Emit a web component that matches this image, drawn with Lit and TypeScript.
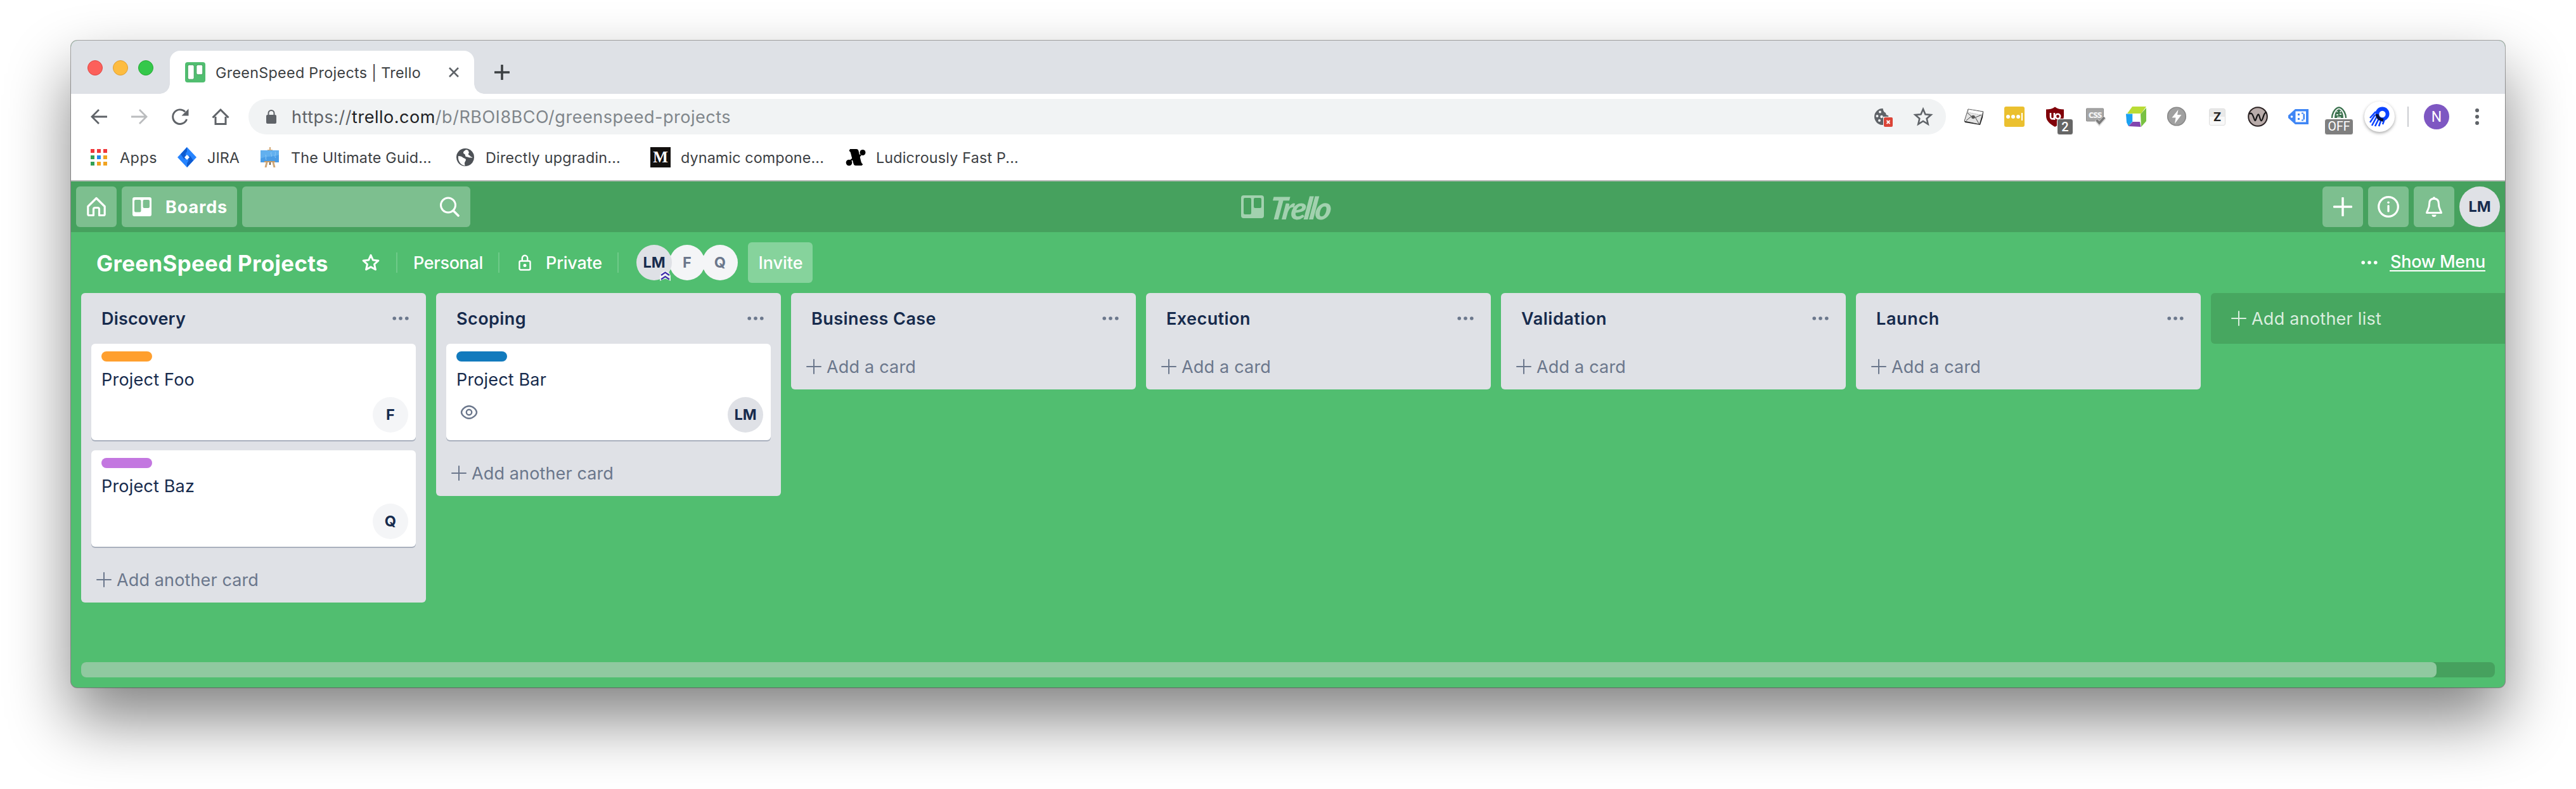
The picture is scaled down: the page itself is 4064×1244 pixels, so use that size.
import { LitElement, html, svg, css, nothing } from "lit";
import { customElement, property } from "lit/decorators.js";

/** Left inset of the glyphs inside a text box, in pixels. */
const INSET = 1;

/** Single line of text whose tracking is adjusted so that it fills the given width. */
@customElement("ui-text")
class UiText extends LitElement {
  @property({ type: Number }) w = 0;

  static styles = css`
    :host { display: inline-block; white-space: nowrap; flex: none; text-align: left; padding: 2px 0 0 1px; }
    .run { display: inline-block; white-space: nowrap; vertical-align: top; }
  `;

  render() {
    return html`<span class="run"><slot></slot></span>`;
  }

  updated() {
    const run = this.renderRoot.querySelector(".run") as HTMLElement;
    const count = (this.textContent ?? "").trim().length;
    if (!this.w || !count) return;
    this.style.width = `${this.w}px`;
    run.style.letterSpacing = "0px";
    const natural = run.getBoundingClientRect().width;
    run.style.letterSpacing = `${(this.w - INSET - natural) / count}px`;
  }
}

type Card = { title: string; w: number; label: string; member: string; watched?: boolean };
type List = { title: string; w: number; cards: Card[] };

const LISTS: List[] = [
  {
    title: "Discovery", w: 134,
    cards: [
      { title: "Project Foo", w: 148, label: "orange", member: "F" },
      { title: "Project Baz", w: 148, label: "purple", member: "Q" },
    ],
  },
  {
    title: "Scoping", w: 111,
    cards: [{ title: "Project Bar", w: 143, label: "blue", member: "LM", watched: true }],
  },
  { title: "Business Case", w: 198, cards: [] },
  { title: "Execution", w: 134, cards: [] },
  { title: "Validation", w: 136, cards: [] },
  { title: "Launch", w: 101, cards: [] },
];

const icon = (body: unknown, size = 32) =>
  html`<svg class="icon" width=${size} height=${size} viewBox="0 0 32 32" fill="none">${body}</svg>`;

const plus = (size: number, stroke = 2) => html`<svg class="icon" width=${size} height=${size} viewBox="0 0 24 24" fill="none"
  stroke="currentColor" stroke-width=${stroke} stroke-linecap="round"><path d="M12 1v22M1 12h22"/></svg>`;

const dots = html`<svg class="icon" width="26" height="8" viewBox="0 0 26 8" fill="currentColor">
  <circle cx="3.2" cy="4" r="2.8"/><circle cx="13" cy="4" r="2.8"/><circle cx="22.8" cy="4" r="2.8"/></svg>`;

const ICONS = {
  back: icon(svg`<path d="M29 16H5M16 5 5 16l11 11" stroke="#5f6368" stroke-width="2.8"/>`, 32),
  forward: icon(svg`<path d="M3 16h24M16 5l11 11-11 11" stroke="#babcbe" stroke-width="2.8"/>`, 32),
  reload: icon(svg`<path d="M26.6 20A11.3 11.3 0 1 1 24 8.2" stroke="#5f6368" stroke-width="2.9"/><path d="M29.5 3.5v11h-11z" fill="#5f6368"/>`),
  home: icon(svg`<path d="M8 16v11.5h16V16M3.5 17.500 16 5l12.500 12.500" stroke="#5f6368" stroke-width="3"/>`),
  lock: html`<svg class="icon" width="24" height="24" viewBox="0 0 24 24"><rect x="4" y="9" width="16" height="14" rx="2" fill="#5f6368"/><path d="M7.500 10V6.500a4.500 4.500 0 0 1 9 0V10" fill="none" stroke="#5f6368" stroke-width="2"/></svg>`,
  cookie: icon(svg`<path d="M14.500 3A13 13 0 1 0 27 17h-1c-2 0-3-1-3-3-2 0-4-1-4-4-3-1-4-4-4.500-7z" fill="#5f6368"/>
    <g fill="#f1f3f4"><circle cx="10" cy="8.500" r="2"/><circle cx="5.500" cy="15" r="2"/><circle cx="12.500" cy="16" r="2.200"/><circle cx="9" cy="22" r="2"/></g>
    <rect x="15" y="16" width="16" height="17" fill="#f1f3f4"/><rect x="16" y="17" width="14" height="15" rx="2" fill="#db4437"/>
    <path d="m20.500 22 5 5m0-5-5 5" stroke="#fff" stroke-width="1.800"/>`),
  star: icon(svg`<path d="m16 4 3.500 8.300 9 .8-6.800 5.900 2 8.800L16 23l-7.700 4.800 2-8.800-6.800-5.900 9-.8z" stroke="#5f6368" stroke-width="2.600"/>`),
};

const EXTENSIONS = [
  icon(svg`<path d="m7 4 24 4-6 20L1 23z" fill="#e4e4e4" stroke="#555" stroke-width="1"/><path d="m1 23 24 5 6-20-1 9-4 12L2 25z" fill="#222"/><path d="m8 4.500 22 4-1.500 5L6.500 9z" fill="#fff" stroke="#888" stroke-width=".6" stroke-dasharray="2 1"/><path d="m6 10 7 6 2.500 1.500L19 17l9-4M4 22l8-6.500M24 27l-5.500-9.500" stroke="#444" stroke-width="1"/><circle cx="15" cy="16.500" r="2.800" fill="#555"/>`),
  icon(svg`<rect width="32" height="32" rx="3" fill="#ebc02f"/><g fill="#fff"><circle cx="6" cy="16" r="3"/><circle cx="14" cy="16" r="3"/><circle cx="22" cy="16" r="3"/><path d="M27 10h2v12h-2z"/></g>`),
  html`<span class="badged">${icon(svg`<path d="M16 .5c4 3 8.500 4 14 4V15c0 8-7 13-14 17C9 28 2 23 2 15V4.500c5.500 0 10-1 14-4z" fill="#800009"/><path d="M9 10v6.500a3 3 0 0 0 6 0V10M15 16v5" stroke="#fff" stroke-width="2.600"/><circle cx="20.500" cy="15.500" r="3.700" stroke="#fff" stroke-width="2.600"/>`)}<span class="badge count">2</span></span>`,
  html`<span class="badged">${icon(svg`<rect x="1.500" y="3" width="27" height="20" rx="1" fill="#a5a5a5" stroke="#8c8c8c"/><path d="m17 21 5 6 9-10" stroke="#ddd" stroke-width="6"/><path d="m17.500 21 4.500 5 8-9" stroke="#7b7b7b" stroke-width="3.600"/>`)}<span class="css-word">CSS</span></span>`,
  icon(svg`<path d="M10 0h22l-8 11H2z" fill="#b9dc35"/><path d="M32 2v21l-8 9-1-20z" fill="#79c142"/><path d="M0 11.500h10.500v12L4 31l-3-6z" fill="#1ba1f2"/><path d="M10.500 24H22l1.500 8L4 31z" fill="#8246af"/><path d="M10.500 11.500H23V24H10.500z" fill="#fff"/>`),
  icon(svg`<circle cx="16" cy="15.500" r="14.300" fill="#a0a0a0" stroke="#888" stroke-width="1.600"/><path d="M18.500 5 8.500 17.500h6L13 27l10.500-14H17z" fill="#fff"/>`),
  html`<span class="zenhub">Z</span>`,
  icon(svg`<circle cx="16" cy="16" r="14.800" fill="#b9acaa" stroke="#2b2223" stroke-width="2"/><path d="M3 12c3-4 5 1 7.500 8 1.500 4 2 2 4-4 2-5 3-5 4.500 1 2 7 3 7 5 1 2-6 3-9 6-9" stroke="#151515" stroke-width="2.200"/>`),
  icon(svg`<path d="M11 4h21v24H11L0 18v-4z" fill="#3f86f5"/><circle cx="5.500" cy="16" r="1.800" fill="#fff"/><path d="M11.500 7.500H28v17H11.500z" fill="#fff"/><path d="M15 11h3v3h-3zM15 18h3v3h-3zM21 9.500h3v2h-3zM23.500 11.500H26v9h-2.500zM21 20.500h3v2h-3z" fill="#3f86f5"/>`),
  html`<span class="badged">${icon(svg`<path d="M5 18c0-7 4-13 7-15q4-3 8 0c3 2 7 8 7 15" stroke="#3d7350" stroke-width="2.400"/><path d="M9 18c0-7 2-12 7-14 5 2 7 7 7 14z" fill="#3d7350"/><g fill="#dfeae2"><circle cx="13" cy="8" r="1"/><circle cx="18.500" cy="8" r="1.200"/><path d="M12 12h3v2h-3zM17 11h3v2h-3zM13 16h6v1.500h-6z"/></g>`)}<span class="badge off">OFF</span></span>`,
  html`<span class="rocket">${icon(svg`<path d="M10 8 1 18M9 13 1 25M11 17 4 30M15 19 9 31M19 20l-4 11M24 20l-3 8" stroke="#0b43ff" stroke-width="2.600"/><circle cx="20.500" cy="11.500" r="11" fill="#0b43ff"/><path d="M12 12q1 8 10 9.500" stroke="#07123f" stroke-width="5"/><circle cx="20.500" cy="12" r="5.200" fill="#fff"/>`)}</span>`,
];

const BOOKMARKS = [
  { cls: "b0", w: 60, text: "Apps", glyph: icon(svg`
    <path d="M3 3h6v6H3zM13 3h6v6h-6zM23 3h6v6h-6z" fill="#f0373c"/><path d="M3 13h6v6H3zM3 23h6v6H3z" fill="#32a155"/>
    <path d="M13 13h6v6h-6z" fill="#2287f0"/><path d="M23 13h6v6h-6zM13 23h6v6h-6zM23 23h6v6h-6z" fill="#f1a321"/>`) },
  { cls: "b1", w: 52, text: "JIRA", glyph: icon(svg`
    <path d="m16 0 15 16-15 16L1 16z" fill="#2684ff"/><path d="M16 0v7c-3 3-3 6-.5 8l-4 4L6 11zM16 32v-7c3-3 3-6 .5-8l4-4 5.500 8z" fill="#0e5bd0"/><path d="m16 12 4 4-4 4-4-4z" fill="#fff"/>`) },
  { cls: "b2", w: 223, text: "The Ultimate Guid...", glyph: icon(svg`
    <path d="M15 0h2v6h-2zM12 4h8v2h-8z" fill="#d0a878"/><path d="M1 5h29v19H1z" fill="#4a9de6"/><path d="M1 5h29v7c-8 4-18 1-29 6z" fill="#62b0ef"/><path d="M18 8c-2 3 2 4 0 7M24 7c2 4-2 6 1 10M9 12c2 3-1 5 1 8" stroke="#8cc8f5"/><path d="M7 22h17v2H7z" fill="#c99b66"/><path d="m11 24-2 8M21 24l2 8" stroke="#d0a878" stroke-width="3"/><path d="M15 24h2v4h-2z" fill="#5f5545"/>`) },
  { cls: "b3", w: 214, text: "Directly upgradin...", glyph: icon(svg`
    <circle cx="16" cy="16" r="14" fill="#4d5156"/><path d="M5 14c4 0 6 1 8 3 2 1 4 1 4 3s-2 3-2 5 0 3 1 4c-6 0-12-6-11-15zM17 4c-2 2-4 2-4 5 0 2 3 1 3 4s3 2 5 3 4 0 6 1c1-6-3-12-10-13z" fill="#fff"/><path d="M20 3.500c4 2 8 6 8 12.500-2 0-4-1-5-3-2 0-3-3-1-4z" fill="#4d5156"/>`) },
  { cls: "b4", w: 227, text: "dynamic compone...", glyph: html`<span class="medium">M</span>` },
  { cls: "b5", w: 226, text: "Ludicrously Fast P...", glyph: icon(svg`
    <path d="M7 3h10c2 0 3 1 3.500 3l3.500 15c1 4 1.500 5 3.500 6l-2 2H16c-2 0-3-1-3.500-3L9 13C8 8 7.500 7 5.500 6z" fill="#000"/><circle cx="27" cy="8.500" r="4.500" fill="#000"/><circle cx="5.500" cy="24.500" r="4.800" fill="#000"/><path d="m24 12-3 3M8 21l4-3" stroke="#000" stroke-width="2.600"/>`) },
];

@customElement("app-root")
class AppRoot extends LitElement {
  static styles = css`
    :host {
      display: block; box-sizing: border-box; width: 4064px; height: 1244px; padding: 64px 112px;
      overflow: hidden; background: #fff; font-family: Inter, Roboto, sans-serif; font-size: 27px; line-height: 40px;
    }
    * { box-sizing: border-box; }
    .icon { display: block; flex: none; }
    .window {
      display: flex; flex-direction: column; width: 3840px; height: 1020px; border-radius: 10px; background: #51be70;
      box-shadow: 0 0 0 1px rgba(0, 0, 0, .33), 0 50px 100px rgba(0, 0, 0, .49);
    }

    .tabs { display: flex; height: 84px; padding: 16px 0 0 26px; background: #dee1e6; border-radius: 10px 10px 0 0; color: #3c4043; font-size: 23.300px; }
    .lights { display: flex; gap: 16px; padding-top: 15px; width: 130px; }
    .light { width: 24px; height: 24px; border-radius: 50%; border: 1px solid; }
    .red { background: #fc605b; border-color: #df4744; }
    .yellow { background: #fdbc40; border-color: #de9f34; }
    .green { background: #34c84a; border-color: #27aa35; }
    .tab { position: relative; display: flex; align-items: center; width: 480px; height: 68px; padding-left: 24px; background: #fff; border-radius: 16px 16px 0 0; }
    .tab::before, .tab::after { content: ""; position: absolute; bottom: 0; width: 16px; height: 16px; }
    .tab::before { left: -16px; background: radial-gradient(circle at 0 0, transparent 15.500px, #fff 16px); }
    .tab::after { right: -16px; background: radial-gradient(circle at 100% 0, transparent 15.500px, #fff 16px); }
    .tab ui-text { margin: 0 44px 0 15px; }
    .new-tab { display: flex; align-items: center; height: 68px; margin-left: 32px; }

    .toolbar { display: flex; align-items: center; height: 72px; padding-left: 12px; background: #fff; }
    .cell { display: flex; flex: none; align-items: center; justify-content: center; width: 64px; height: 64px; }
    .omnibox { display: flex; align-items: center; width: 2678px; height: 56px; margin: 0 12px; padding: 0 20px 0 24px; border-radius: 28px; background: #f1f3f4; color: #80868b; }
    .omnibox ui-text { margin: 0 auto 0 19px; }
    .scheme { color: #5f6368; }
    .domain { color: #202124; }
    .omni-icons { display: flex; gap: 30px; }
    .badged { position: relative; display: block; width: 32px; height: 32px; }
    .badge { position: absolute; display: flex; align-items: center; justify-content: center; height: 26px; border: 1px solid #fff; border-radius: 4px; color: #fff; font-family: Roboto, sans-serif; font-size: 20px; }
    .count { left: 19px; top: 19px; width: 26px; background: #666; font-weight: 500; }
    .off { left: -7px; top: 19px; width: 46px; background: #7f7f7f; font-size: 19.500px; }
    .css-word { position: absolute; left: 3px; top: 4px; width: 24px; text-align: center; color: #f2f2f2; font: 800 13px/18px "Open Sans", sans-serif; letter-spacing: -1px; }
    .zenhub { width: 26px; height: 27px; border: 1px solid #ddd; border-radius: 3px; background: linear-gradient(#e9e9e9 50%, #f8f8f8 50%); color: #222; text-align: center; font: 700 19px/25px Inter, sans-serif; }
    .rocket { display: flex; align-items: center; justify-content: center; width: 48px; height: 48px; border-radius: 50%; background: #fff; box-shadow: 0 2px 5px rgba(0, 0, 0, .35); }
    .divider { width: 2px; height: 32px; margin: 0 24px 0 12px; background: #cbcdd1; }
    .profile { width: 40px; height: 40px; border-radius: 50%; background: #7e57c2; color: #fff; font: 400 23px/41px Roboto, sans-serif; text-align: center; }
    .kebab { margin-left: 40px; }

    .bookmarks { display: flex; height: 66px; padding: 0 0 8px 28px; border-bottom: 2px solid #b9bbb9; background: #fff; color: #3c4043; font-size: 23.300px; align-items: center; }
    .bookmark { display: flex; align-items: center; }
    .b0 ui-text { margin: 0 31px 0 16px; }
    .b1 ui-text { margin: 0 32px 0 15px; }
    .b2 ui-text { margin: 0 37px 0 16px; }
    .b3 ui-text { margin: 0 47px 0 15px; }
    .b4 ui-text { margin: 0 34px 0 15px; }
    .b5 ui-text { margin: 0 0 0 15px; }
    .medium { width: 32px; height: 32px; background: #12100e; color: #fff; font: 700 25px/32px "Liberation Serif", serif; text-align: center; }

    .header { display: flex; align-items: center; height: 80px; padding: 0 8px; background: #46a15e; color: #fff; }
    .group { display: flex; flex: 1; gap: 8px; }
    .end { justify-content: flex-end; }
    .btn { display: flex; align-items: center; justify-content: center; height: 64px; min-width: 64px; border-radius: 6px; background: #7dbf8f; }
    .boards { justify-content: flex-start; width: 182px; padding-left: 16px; font-weight: 700; }
    .boards ui-text { margin-left: 20px; }
    .search { width: 360px; justify-content: flex-end; padding-right: 17px; }
    .brand { display: flex; align-items: center; gap: 9px; color: #a2d1af; }
    .wordmark { font: italic 900 49px/56px Lato, sans-serif; transform: skewX(-8deg); }
    .avatar { display: flex; align-items: center; justify-content: center; flex: none; width: 56px; height: 56px; border-radius: 50%; background: #f4f5f7; color: #172b4d; font-size: 23.500px; font-weight: 700; }
    .lm { background: #dfe1e6; }
    .big { width: 64px; height: 64px; }

    .board-head { display: flex; align-items: center; height: 96px; padding: 0 31px 0 39px; color: #fff; font-weight: 500; }
    .board-name { font-size: 34.800px; font-weight: 700; margin-right: 52px; }
    .rule { width: 2px; height: 32px; background: #6fca89; }
    .star { margin-right: 25px; }
    .personal { margin: 0 24px; }
    .padlock { margin: 0 20px 0 28px; }
    .private { margin-right: 24px; }
    .members { position: relative; display: flex; gap: 0; margin: 0 16px 0 28px; }
    .members .avatar { color: #6b778c; }
    .members .avatar + .avatar { margin-left: -4px; }
    .members .lm { color: #172b4d; position: relative; }
    .rank { position: absolute; left: 36px; top: 40px; }
    .invite { width: 102px; background: #86d39c; }
    .menu { display: flex; align-items: center; gap: 19px; margin-left: auto; }
    .menu ui-text { border-bottom: 2px solid #fff; line-height: 26px; margin-bottom: 2px; }

    .lists { display: flex; align-items: flex-start; gap: 16px; height: 582px; padding-left: 16px; overflow: hidden; }
    .list { flex: none; width: 544px; border-radius: 6px; background: #dfe1e6; color: #172b4d; }
    .list-head { display: flex; align-items: center; justify-content: space-between; height: 80px; padding: 0 27px 0 31px; font-weight: 600; }
    .list-head .icon { color: #6b778c; }
    .card { display: flex; flex-direction: column; width: 512px; height: 152px; margin: 0 16px 16px; padding: 12px 12px 12px 15px; border-radius: 6px; background: #fff; box-shadow: 0 2px 0 #a9b0bd; }
    .label { width: 80px; height: 16px; margin: 0 0 7px 1px; border-radius: 8px; }
    .orange { background: #ff9f2e; }
    .purple { background: #c377e0; }
    .blue { background: #127abd; }
    .card-foot { display: flex; align-items: center; justify-content: flex-end; margin-top: 7px; }
    .eye { margin: 0 auto 8px 7px; color: #6b778c; }
    .add { display: flex; align-items: center; gap: 7px; height: 72px; padding-left: 24px; color: #6b778c; }
    .add-list { display: flex; align-items: center; flex: none; gap: 7px; width: 464px; height: 80px; padding-left: 32px; border-radius: 6px 0 0 6px; background: #47a760; color: #daeedf; }
    .track { width: 3808px; height: 24px; margin-left: 16px; border-radius: 8px; background: #46a15e; }
    .thumb { width: 3716px; height: 24px; border-radius: 8px; background: #90c9a0; }
  `;

  private card(c: Card) {
    return html`<article class="card">
      <span class="label ${c.label}"></span>
      <ui-text w=${c.w}>${c.title}</ui-text>
      <div class="card-foot">
        ${c.watched
          ? html`<svg class="icon eye" width="28" height="24" viewBox="0 0 28 24" fill="none" stroke="currentColor" stroke-width="2.400"><path d="M2 12C2 8 8 2.200 14 2.200S26 8 26 12s-6 9.800-12 9.800S2 16 2 12z"/><circle cx="14" cy="12" r="4.200"/></svg>`
          : nothing}
        <span class="avatar ${c.member === "LM" ? "lm" : ""}">${c.member}</span>
      </div>
    </article>`;
  }

  private list(l: List) {
    return html`<section class="list">
      <div class="list-head"><ui-text w=${l.w}>${l.title}</ui-text>${dots}</div>
      ${l.cards.map((c) => this.card(c))}
      <div class="add">${plus(24)}${l.cards.length
        ? html`<ui-text w="225">Add another card</ui-text>`
        : html`<ui-text w="142">Add a card</ui-text>`}</div>
    </section>`;
  }

  render() {
    return html`<div class="window">
      <div class="tabs">
        <div class="lights"><span class="light red"></span><span class="light yellow"></span><span class="light green"></span></div>
        <div class="tab">
          ${icon(svg`<rect width="32" height="32" rx="4" fill="#51be70"/><rect x="4.200" y="4.200" width="10" height="23" rx="2.500" fill="#fff" stroke="#3f9d5a" stroke-width="1"/><rect x="17.800" y="4.200" width="10" height="15.500" rx="2.500" fill="#fff" stroke="#3f9d5a" stroke-width="1"/>`)}
          <ui-text w="325">GreenSpeed Projects | Trello</ui-text>
          <svg class="icon" width="16" height="16" viewBox="0 0 16 16" stroke="#5f6368" stroke-width="2.600"><path d="m1 1 14 14M15 1 1 15"/></svg>
        </div>
        <span class="new-tab">${plus(24, 3.6)}</span>
      </div>

      <div class="toolbar">
        <span class="cell">${ICONS.back}</span><span class="cell">${ICONS.forward}</span>
        <span class="cell">${ICONS.reload}</span><span class="cell">${ICONS.home}</span>
        <div class="omnibox">
          ${ICONS.lock}
          <ui-text w="694"><span class="scheme">https://</span><span class="domain">trello.com</span>/b/RBOI8BCO/greenspeed-projects</ui-text>
          <span class="omni-icons">${ICONS.cookie}${ICONS.star}</span>
        </div>
        ${EXTENSIONS.map((e) => html`<span class="cell">${e}</span>`)}
        <span class="divider"></span>
        <span class="profile">N</span>
        <svg class="icon kebab" width="8" height="28" viewBox="0 0 8 28" fill="#5f6368"><circle cx="4" cy="4" r="3"/><circle cx="4" cy="14" r="3"/><circle cx="4" cy="24" r="3"/></svg>
      </div>

      <div class="bookmarks">
        ${BOOKMARKS.map((b) => html`<span class="bookmark ${b.cls}">${b.glyph}<ui-text w=${b.w}>${b.text}</ui-text></span>`)}
      </div>

      <header class="header">
        <div class="group">
          <span class="btn">${icon(svg`<path d="M16 2.500 2.800 15.500V28a1.500 1.500 0 0 0 1.500 1.500h7.200V20q0-2.500 2.500-2.500h4q2.500 0 2.500 2.500v9.500h7.200a1.500 1.500 0 0 0 1.500-1.500V15.500z" stroke="#fff" stroke-width="3.200" stroke-linejoin="round"/>`)}</span>
          <span class="btn boards">${icon(svg`<path fill-rule="evenodd" fill="#fff" d="M4 1h24a3 3 0 0 1 3 3v24a3 3 0 0 1-3 3H4a3 3 0 0 1-3-3V4a3 3 0 0 1 3-3zm2 4a2 2 0 0 0-2 2v15.500a2 2 0 0 0 2 2h6.500a2 2 0 0 0 2-2V7a2 2 0 0 0-2-2zm13.500 0a2 2 0 0 0-2 2v9a2 2 0 0 0 2 2H26a2 2 0 0 0 2-2V7a2 2 0 0 0-2-2z"/>`)}<ui-text w="99">Boards</ui-text></span>
          <span class="btn search">${icon(svg`<circle cx="14" cy="13.500" r="11.500" stroke="#fff" stroke-width="3"/><path d="m22 22 8 8" stroke="#fff" stroke-width="3.600" stroke-linecap="round"/>`)}</span>
        </div>
        <div class="brand">
          <svg class="icon" width="36" height="36" viewBox="0 0 36 36"><path fill-rule="evenodd" fill="currentColor" d="M4 0h28a4 4 0 0 1 4 4v28a4 4 0 0 1-4 4H4a4 4 0 0 1-4-4V4a4 4 0 0 1 4-4zm2 4a2 2 0 0 0-2 2v22a2 2 0 0 0 2 2h8a2 2 0 0 0 2-2V6a2 2 0 0 0-2-2zm16 0a2 2 0 0 0-2 2v12a2 2 0 0 0 2 2h8a2 2 0 0 0 2-2V6a2 2 0 0 0-2-2z"/></svg>
          <ui-text class="wordmark" w="103">Trello</ui-text>
        </div>
        <div class="group end">
          <span class="btn">${plus(30, 2.8)}</span>
          <span class="btn"><svg class="icon" width="34" height="34" viewBox="0 0 34 34" fill="none" stroke="#fff" stroke-width="3.200" stroke-linecap="round"><circle cx="17" cy="17" r="15.300"/><path d="M17 15.500v8.500"/><circle cx="17" cy="10.200" r="1.800" fill="#fff" stroke="none"/></svg></span>
          <span class="btn">${icon(svg`<path d="M16 3.200c-5 0-7.300 3.200-7.300 7.500 0 8-2.700 9.300-4.200 14.800h23c-1.500-5.500-4.200-6.800-4.200-14.800 0-4.300-2.300-7.500-7.300-7.500z" stroke="#fff" stroke-width="3" stroke-linejoin="round"/><circle cx="16" cy="2.500" r="2.200" fill="#fff"/><path d="M12.500 28.500h7a3.500 3.500 0 0 1-7 0z" fill="#fff"/>`)}</span>
          <span class="avatar lm big">LM</span>
        </div>
      </header>

      <div class="board-head">
        <ui-text class="board-name" w="367">GreenSpeed Projects</ui-text>
        <svg class="icon star" width="30" height="30" viewBox="0 0 32 32" fill="none" stroke="#fff" stroke-width="3.200" stroke-linejoin="round"><path d="m16 3.500 3.700 8.300 9 .9-6.800 6.100 2 9L16 23.300l-7.900 4.500 2-9-6.800-6.100 9-.9z"/></svg>
        <span class="rule"></span>
        <ui-text class="personal" w="111">Personal</ui-text>
        <span class="rule"></span>
        <svg class="icon padlock" width="24" height="26" viewBox="0 0 24 26" fill="none" stroke="#fff" stroke-width="2.400"><rect x="3.500" y="10.500" width="17" height="14" rx="2"/><path d="M7.800 10.500V6a4.200 4.200 0 0 1 8.400 0v4.500"/><circle cx="12" cy="17.500" r="2.500" fill="#fff" stroke="none"/></svg>
        <ui-text class="private" w="90">Private</ui-text>
        <span class="rule"></span>
        <div class="members">
          <span class="avatar lm">LM</span><span class="avatar">F</span><span class="avatar">Q</span>
          <svg class="rank" width="19" height="18" viewBox="0 0 19 18" fill="none"><path d="M1 17V9L3 4l6.500-3L16 4l2 5v8l-4-2-4.500-1.500L5 15z" fill="#f4f5f7" opacity=".9"/><path d="m3 8 6.500-4.500L16 8M3 14.500 9.500 10l6.500 4.500" stroke="#3d2bab" stroke-width="2.200"/></svg>
        </div>
        <span class="btn invite"><ui-text w="71">Invite</ui-text></span>
        <div class="menu">${dots}<ui-text w="151">Show Menu</ui-text></div>
      </div>

      <main class="lists">
        ${LISTS.map((l) => this.list(l))}
        <div class="add-list">${plus(24)}<ui-text w="206">Add another list</ui-text></div>
      </main>
      <div class="track"><div class="thumb"></div></div>
    </div>`;
  }
}
